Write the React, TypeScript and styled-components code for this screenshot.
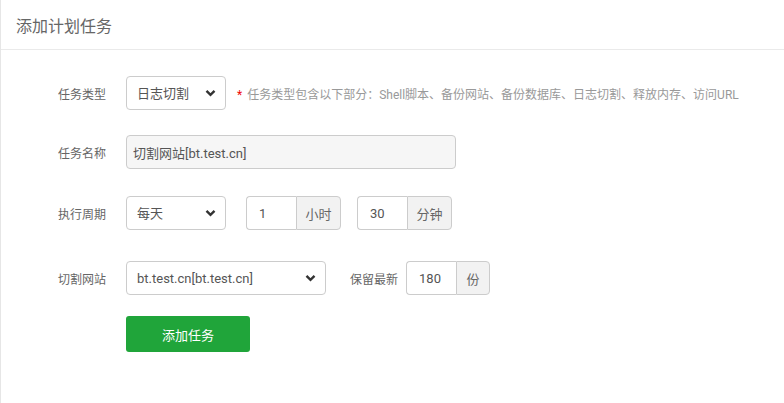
import * as React from "react";
import styled, { createGlobalStyle } from "styled-components";

const Global = createGlobalStyle`
  html, body {
    margin: 0;
    padding: 0;
    background: #fff;
  }
  body {
    font-family: Roboto, "Noto Sans CJK SC", sans-serif;
    color: #555;
  }
`;

const Panel = styled.div`
  width: 784px;
  height: 403px;
  box-sizing: border-box;
  border-left: 1px solid #e6e6e6;
  background: #fff;
`;

const Header = styled.div`
  height: 49px;
  border-bottom: 1px solid #eaeaea;
  padding-left: 15px;
  display: flex;
  align-items: center;
  font-size: 16px;
  color: #666;
`;

const Form = styled.div`
  padding-top: 26px;
  display: flex;
  flex-direction: column;
`;

const Line = styled.div<{ $gap: number }>`
  display: flex;
  align-items: center;
  margin-bottom: ${(p) => p.$gap}px;
`;

const Name = styled.span`
  width: 105px;
  text-align: right;
  margin-right: 20px;
  font-size: 12px;
  color: #666;
  flex-shrink: 0;
`;

const SelectWrap = styled.div<{ $w: number }>`
  position: relative;
  width: ${(p) => p.$w}px;
  height: 34px;
  flex-shrink: 0;
`;

const Select = styled.select`
  appearance: none;
  width: 100%;
  height: 100%;
  box-sizing: border-box;
  border: 1px solid #ccc;
  border-radius: 4px;
  background: #fff;
  padding: 0 24px 0 10px;
  font-family: inherit;
  font-size: 13px;
  color: #555;
  outline: none;
`;

const Chevron = styled.svg`
  position: absolute;
  right: 10px;
  top: 50%;
  margin-top: -4px;
  pointer-events: none;
`;

const Hint = styled.span`
  margin-left: 11px;
  font-size: 12px;
  color: #999;
  white-space: nowrap;
  em {
    font-style: normal;
    color: #ef0808;
    margin-right: 5px;
  }
`;

const TextInput = styled.input<{ $w: number; $readonly?: boolean }>`
  width: ${(p) => p.$w}px;
  height: 34px;
  box-sizing: border-box;
  border: 1px solid #ccc;
  border-radius: 4px;
  background: ${(p) => (p.$readonly ? "#f6f6f6" : "#fff")};
  padding: 0 6px;
  font-family: inherit;
  font-size: 13px;
  color: #555;
  outline: none;
`;

const Group = styled.div<{ $ml: number }>`
  display: flex;
  margin-left: ${(p) => p.$ml}px;
  height: 34px;
  flex-shrink: 0;
`;

const GroupInput = styled.input`
  width: 50px;
  height: 34px;
  box-sizing: border-box;
  border: 1px solid #ccc;
  border-right: none;
  border-radius: 4px 0 0 4px;
  padding: 0 12px;
  font-family: inherit;
  font-size: 13px;
  color: #555;
  outline: none;
`;

const Addon = styled.span<{ $w: number }>`
  width: ${(p) => p.$w}px;
  height: 34px;
  box-sizing: border-box;
  border: 1px solid #ccc;
  border-radius: 0 4px 4px 0;
  background: #f2f2f2;
  display: flex;
  align-items: center;
  justify-content: center;
  font-size: 13px;
  color: #666;
`;

const InlineName = styled.span`
  margin-left: 24px;
  margin-right: 8px;
  font-size: 12px;
  color: #666;
`;

const Submit = styled.button`
  margin-left: 125px;
  width: 124px;
  height: 36px;
  border: none;
  border-radius: 3px;
  background: #20a53a;
  color: #fff;
  font-family: inherit;
  font-size: 13px;
  cursor: pointer;
`;

const Arrow = () => (
  <Chevron width="11" height="8" viewBox="0 0 11 8">
    <path d="M1.5 1.8 L5.5 5.8 L9.5 1.8" fill="none" stroke="#333" strokeWidth="2.4" />
  </Chevron>
);

const Dropdown = ({ w, value }: { w: number; value: string }) => (
  <SelectWrap $w={w}>
    <Select defaultValue={value}>
      <option>{value}</option>
    </Select>
    <Arrow />
  </SelectWrap>
);

export default function App() {
  return (
    <Panel>
      <Global />
      <Header>添加计划任务</Header>
      <Form>
        <Line $gap={25}>
          <Name>任务类型</Name>
          <Dropdown w={100} value="日志切割" />
          <Hint>
            <em>*</em>任务类型包含以下部分：Shell脚本、备份网站、备份数据库、日志切割、释放内存、访问URL
          </Hint>
        </Line>
        <Line $gap={27}>
          <Name>任务名称</Name>
          <TextInput $w={330} $readonly readOnly defaultValue="切割网站[bt.test.cn]" />
        </Line>
        <Line $gap={31}>
          <Name>执行周期</Name>
          <Dropdown w={100} value="每天" />
          <Group $ml={20}>
            <GroupInput defaultValue="1" />
            <Addon $w={45}>小时</Addon>
          </Group>
          <Group $ml={16}>
            <GroupInput defaultValue="30" />
            <Addon $w={45}>分钟</Addon>
          </Group>
        </Line>
        <Line $gap={21}>
          <Name>切割网站</Name>
          <Dropdown w={200} value="bt.test.cn[bt.test.cn]" />
          <InlineName>保留最新</InlineName>
          <Group $ml={0}>
            <GroupInput defaultValue="180" />
            <Addon $w={34}>份</Addon>
          </Group>
        </Line>
        <Submit>添加任务</Submit>
      </Form>
    </Panel>
  );
}
